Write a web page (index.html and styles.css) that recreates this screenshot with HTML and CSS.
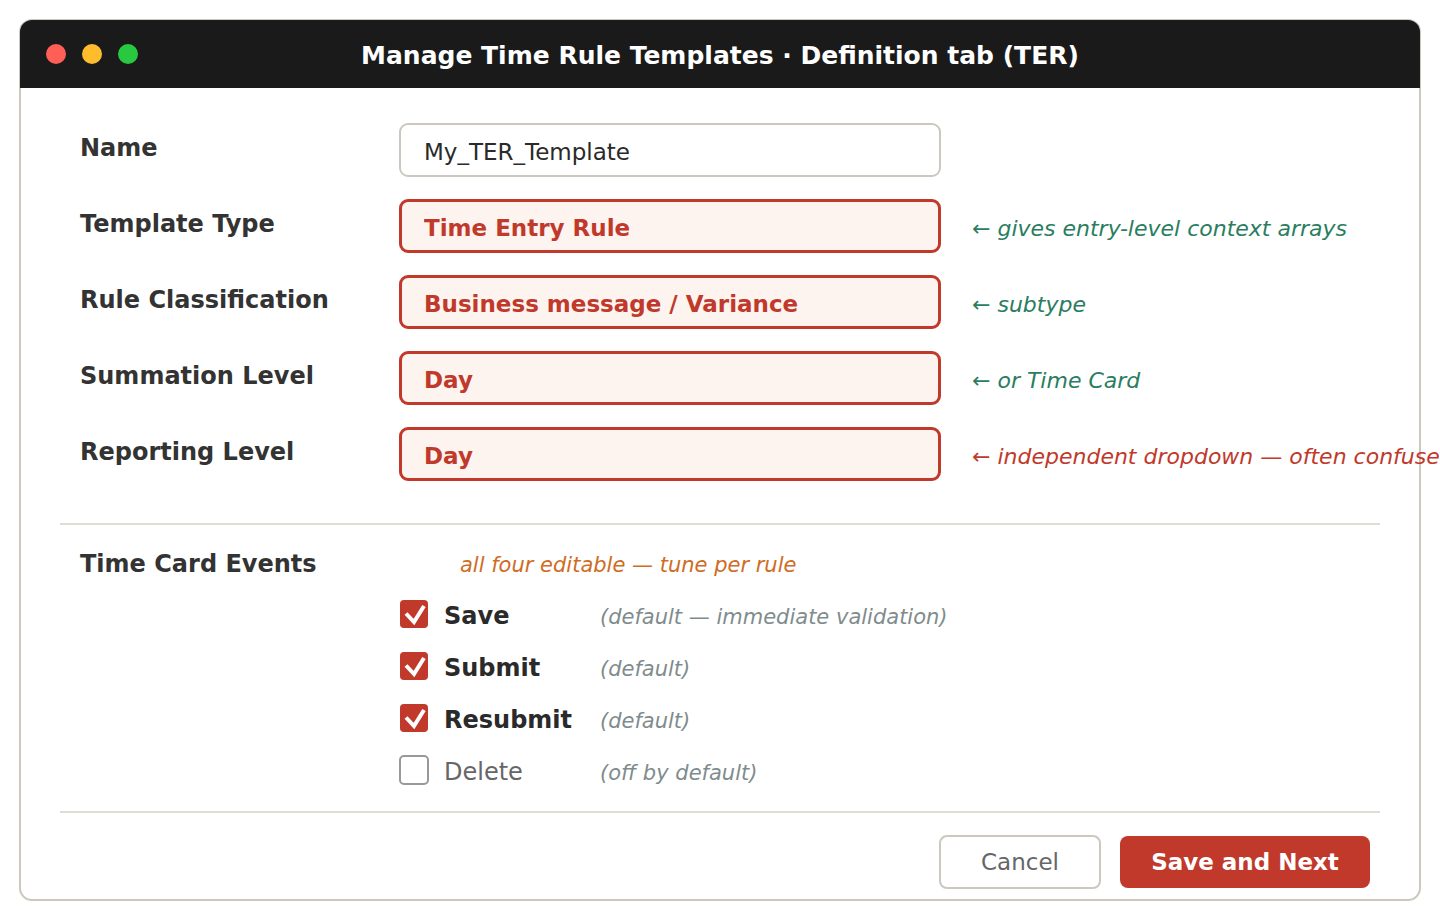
FILE: index.html
```html
<!DOCTYPE html>
<html lang="en">
<head>
<meta charset="utf-8">
<title>Manage Time Rule Templates</title>
<link rel="stylesheet" href="styles.css">
</head>
<body>
<main class="window">
  <header class="titlebar">
    <div class="lights"><span class="light light-close"></span><span class="light light-min"></span><span class="light light-max"></span></div>
    <h1 class="title">Manage Time Rule Templates · Definition tab (TER)</h1>
  </header>
  <form class="form">
    <div class="fields">
      <div class="row">
        <label class="label" for="name">Name</label>
        <input class="field" id="name" type="text" value="My_TER_Template">
      </div>
      <div class="row">
        <label class="label" for="type">Template Type</label>
        <select class="field field-key" id="type"><option>Time Entry Rule</option></select>
        <span class="note">← gives entry-level context arrays</span>
      </div>
      <div class="row">
        <label class="label" for="class">Rule Classification</label>
        <select class="field field-key" id="class"><option>Business message / Variance</option></select>
        <span class="note">← subtype</span>
      </div>
      <div class="row">
        <label class="label" for="summation">Summation Level</label>
        <select class="field field-key" id="summation"><option>Day</option></select>
        <span class="note">← or Time Card</span>
      </div>
      <div class="row">
        <label class="label" for="reporting">Reporting Level</label>
        <select class="field field-key" id="reporting"><option>Day</option></select>
        <span class="note note-warn">← independent dropdown — often confuse</span>
      </div>
    </div>
    <section class="events">
      <div class="events-head">
        <h2 class="events-title">Time Card Events</h2>
        <span class="hint hint-tune">all four editable — tune per rule</span>
      </div>
      <div class="event-list">
        <div class="event">
          <span class="check"><input class="box" type="checkbox" id="save" checked><svg class="tick" viewBox="0 0 28 28" aria-hidden="true"><path d="M6 13.5 14 22 24 6"/></svg></span>
          <label class="event-name" for="save">Save</label>
          <span class="hint">(default — immediate validation)</span>
        </div>
        <div class="event">
          <span class="check"><input class="box" type="checkbox" id="submit" checked><svg class="tick" viewBox="0 0 28 28" aria-hidden="true"><path d="M6 13.5 14 22 24 6"/></svg></span>
          <label class="event-name" for="submit">Submit</label>
          <span class="hint">(default)</span>
        </div>
        <div class="event">
          <span class="check"><input class="box" type="checkbox" id="resubmit" checked><svg class="tick" viewBox="0 0 28 28" aria-hidden="true"><path d="M6 13.5 14 22 24 6"/></svg></span>
          <label class="event-name" for="resubmit">Resubmit</label>
          <span class="hint">(default)</span>
        </div>
        <div class="event">
          <span class="check"><input class="box" type="checkbox" id="delete"><svg class="tick" viewBox="0 0 28 28" aria-hidden="true"><path d="M6 13.5 14 22 24 6"/></svg></span>
          <label class="event-name event-off" for="delete">Delete</label>
          <span class="hint">(off by default)</span>
        </div>
      </div>
    </section>
    <footer class="actions">
      <button class="btn btn-cancel" type="button">Cancel</button>
      <button class="btn btn-save" type="button">Save and Next</button>
    </footer>
  </form>
</main>
</body>
</html>
```
FILE: styles.css
```css
* { box-sizing: border-box; }

body {
  margin: 0;
  padding: 19px;
  overflow-x: hidden;
  background: #fff;
  color: #2a2a2a;
  font-family: "DejaVu Sans", sans-serif;
}

.window {
  border: 2px solid #ccc8c0;
  border-radius: 13px;
  background: #fff;
}

.titlebar {
  display: grid;
  grid-template-columns: 1fr auto 1fr;
  align-items: center;
  height: 68px;
  margin: -1px -1px 0;
  padding: 0 26px;
  border-radius: 12px 12px 0 0;
  background: #1a1a1a;
}

.lights { display: flex; gap: 16px; }
.light { width: 20px; height: 20px; border-radius: 50%; }
.light-close { background: #ff5f57; }
.light-min { background: #ffbd2e; }
.light-max { background: #28c940; }

.title {
  margin: 0;
  padding-top: 4px;
  color: #fff;
  font-size: 25px;
  line-height: 30px;
  white-space: nowrap;
}

.form { padding: 35px 39px 10px; }

.fields {
  display: grid;
  gap: 22px;
  padding: 0 0 42px 20px;
  border-bottom: 2px solid #e0dcd6;
}

.row {
  display: grid;
  grid-template-columns: 319px minmax(200px, 1fr) 439px;
  align-items: center;
}

.label {
  padding-bottom: 4px;
  color: #333;
  font-size: 24px;
  font-weight: bold;
  line-height: 28px;
}

.field {
  width: 100%;
  height: 54px;
  margin: 0;
  padding: 4px 23px 0;
  border: 2px solid #ccc8c0;
  border-radius: 9px;
  background: #fff;
  color: #2a2a2a;
  font-family: inherit;
  font-size: 23px;
  appearance: none;
}

.field-key {
  padding: 4px 22px 0;
  border: 3px solid #c0392b;
  background: #fdf3ef;
  color: #c0392b;
  font-weight: bold;
}

.note {
  padding: 6px 0 0 31px;
  color: #2a7d5f;
  font-size: 22px;
  font-style: italic;
  line-height: 28px;
  white-space: nowrap;
}

.note-warn { color: #c0392b; }

.events {
  padding: 25px 0 27px 20px;
  border-bottom: 2px solid #e0dcd6;
}

.events-head {
  display: grid;
  grid-template-columns: 380px 1fr;
  align-items: baseline;
  margin-bottom: 21px;
}

.events-title {
  margin: 0;
  color: #333;
  font-size: 24px;
  line-height: 28px;
}

.event-list { display: grid; gap: 24px; padding-left: 320px; }

.event {
  display: grid;
  grid-template-columns: 44px 156px 1fr;
  align-items: center;
  height: 28px;
}

.check { display: grid; width: 28px; height: 28px; }
.box, .tick { grid-area: 1 / 1; width: 28px; height: 28px; }

.box {
  margin: 0;
  border-radius: 4px;
  outline: 2px solid #999;
  outline-offset: -1px;
  background: #fff;
  appearance: none;
}

.box:checked { outline: none; background: #c0392b; }

.tick {
  display: none;
  fill: none;
  stroke: #fff;
  stroke-width: 4;
  pointer-events: none;
}

.box:checked + .tick { display: block; }

/* Line boxes are taller than the row, so they are allowed to overhang it evenly. */
.event-name {
  margin: -2px 0;
  padding-top: 4px;
  font-size: 24px;
  font-weight: bold;
  line-height: 28px;
}

.event-off { color: #666; font-weight: normal; }

.hint {
  margin: -3px 0;
  padding-top: 6px;
  color: #7f8c8d;
  font-size: 21px;
  font-style: italic;
  line-height: 28px;
}

.hint-tune { margin: 0; padding-top: 0; color: #d35400; color: #d06c24; }

.actions {
  display: flex;
  justify-content: flex-end;
  align-items: center;
  gap: 19px;
  padding: 22px 10px 0 0;
}

.btn {
  padding: 0;
  border-radius: 8px;
  font-family: inherit;
  font-size: 23px;
}

.btn-cancel {
  width: 162px;
  height: 54px;
  border: 2px solid #ccc8c0;
  background: #fff;
  color: #666;
}

.btn-save {
  width: 250px;
  height: 52px;
  border: 0;
  background: #c0392b;
  color: #fff;
  font-weight: bold;
}
```
